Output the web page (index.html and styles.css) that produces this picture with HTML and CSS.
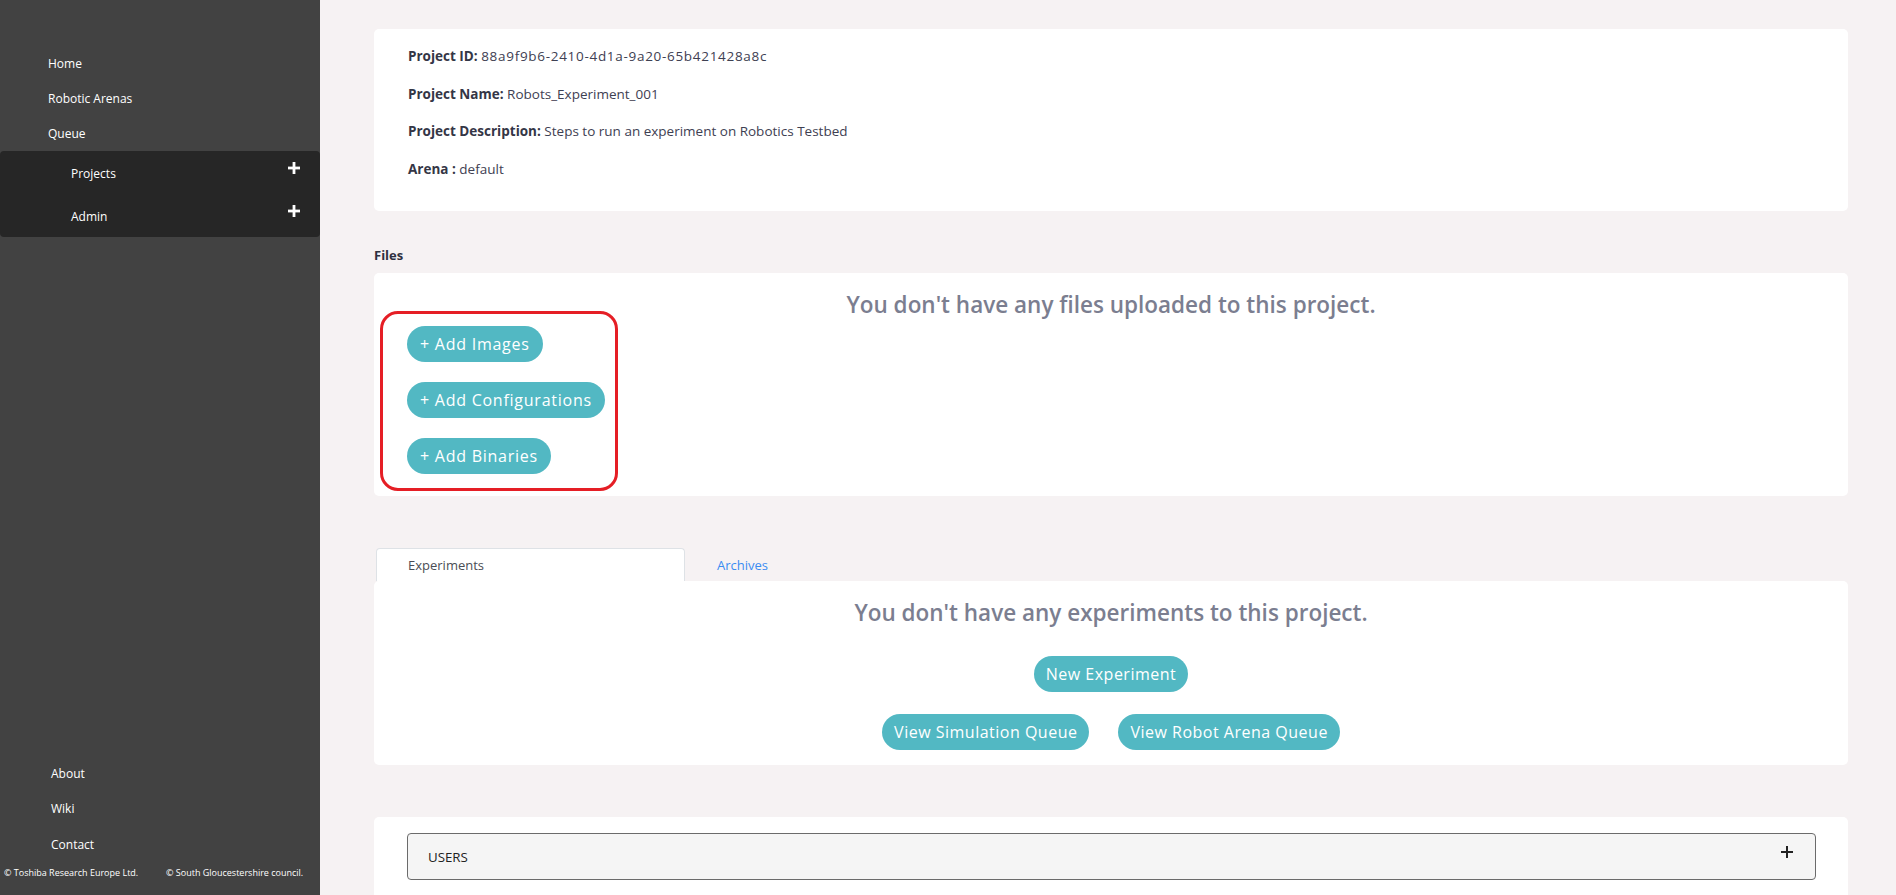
FILE: index.html
```html
<!DOCTYPE html>
<html lang="en">
<head>
<meta charset="utf-8">
<title>Project</title>
<link rel="stylesheet" href="styles.css">
</head>
<body>
<div class="app">
  <aside class="sidebar">
    <nav class="nav-top">
      <a class="nav-link">Home</a>
      <a class="nav-link">Robotic Arenas</a>
      <a class="nav-link">Queue</a>
    </nav>
    <div class="submenu">
      <div class="sub-item"><span>Projects</span>
        <svg class="plus-white" viewBox="0 0 12 12" width="12" height="12"><rect x="4.6" y="0" width="2.8" height="12" fill="#fff"/><rect x="0" y="4.6" width="12" height="2.8" fill="#fff"/></svg>
      </div>
      <div class="sub-item"><span>Admin</span>
        <svg class="plus-white" viewBox="0 0 12 12" width="12" height="12"><rect x="4.6" y="0" width="2.8" height="12" fill="#fff"/><rect x="0" y="4.6" width="12" height="2.8" fill="#fff"/></svg>
      </div>
    </div>
    <nav class="nav-bottom">
      <a class="nav-link">About</a>
      <a class="nav-link">Wiki</a>
      <a class="nav-link">Contact</a>
    </nav>
    <div class="copyright">
      <span>© Toshiba Research Europe Ltd.</span>
      <span>© South Gloucestershire council.</span>
    </div>
  </aside>

  <main class="main">
    <section class="card info-card">
      <p><b>Project ID:</b> <span class="id-value">88a9f9b6-2410-4d1a-9a20-65b421428a8c</span></p>
      <p><b>Project Name:</b> Robots_Experiment_001</p>
      <p><b>Project Description:</b> Steps to run an experiment on Robotics Testbed</p>
      <p><b>Arena :</b> default</p>
    </section>

    <h6 class="section-label">Files</h6>
    <section class="card files-card">
      <h3 class="empty-title">You don't have any files uploaded to this project.</h3>
      <div class="file-buttons">
        <button class="pill">+ Add Images</button>
        <button class="pill">+ Add Configurations</button>
        <button class="pill">+ Add Binaries</button>
      </div>
      <div class="highlight"></div>
    </section>

    <div class="tabs">
      <div class="tab active">Experiments</div>
      <div class="tab link">Archives</div>
    </div>
    <section class="card exp-card">
      <h3 class="empty-title">You don't have any experiments to this project.</h3>
      <div class="exp-row">
        <button class="pill">New Experiment</button>
      </div>
      <div class="exp-row">
        <button class="pill">View Simulation Queue</button>
        <button class="pill">View Robot Arena Queue</button>
      </div>
    </section>

    <section class="card users-card">
      <div class="accordion">
        <span>USERS</span>
        <svg class="plus-dark" viewBox="0 0 12 12" width="12" height="12"><rect x="5" y="0" width="2" height="12" fill="#222"/><rect x="0" y="5" width="12" height="2" fill="#222"/></svg>
      </div>
    </section>
  </main>
</div>
</body>
</html>
```
FILE: styles.css
```css
* { box-sizing: border-box; }
html, body { margin: 0; padding: 0; }
body {
  font-family: "Open Sans", "Noto Sans", sans-serif;
  background: #f6f2f3;
  overflow: hidden;
}
.app {
  display: flex;
  height: 100vh;
  overflow: hidden;
}
.sidebar {
  width: 320px;
  flex: 0 0 320px;
  background: #424242;
  display: flex;
  flex-direction: column;
  padding-top: 45px;
  color: #fff;
}
.nav-top, .nav-bottom {
  display: flex;
  flex-direction: column;
}
.nav-link {
  display: block;
  height: 35px;
  line-height: 35px;
  padding-top: 1px;
  font-size: 12px;
  color: #fff;
  padding-left: 48px;
}
.nav-bottom { margin-top: auto; }
.nav-bottom .nav-link { padding-left: 51px; height: 35.5px; line-height: 35.5px; padding-top: 0; }
.submenu {
  margin-top: 1px;
  background: #262626;
  border-radius: 4px;
  display: flex;
  flex-direction: column;
}
.sub-item {
  height: 43px;
  display: flex;
  align-items: center;
  justify-content: space-between;
  padding: 0 20px 0 71px;
  font-size: 12px;
}
.sub-item span { padding-top: 1px; }
.plus-white { margin-top: -10px; }
.copyright {
  display: flex;
  font-size: 9px;
  padding: 4px 0 16px 4px;
  white-space: nowrap;
}
.copyright span:first-child { width: 162px; }

.main {
  flex: 1;
  padding: 29px 48px 0 54px;
  min-width: 0;
}
.card {
  background: #fff;
  border-radius: 5px;
}
.info-card {
  padding: 17px 34px 15px;
  color: #3e4052;
  font-size: 13.5px;
}
.info-card p {
  margin: 0 0 17.5px;
  line-height: 20px;
  white-space: nowrap;
}
.info-card b { color: #343646; font-weight: 700; }
.id-value { letter-spacing: 0.7px; }
.section-label {
  margin: 36px 0 0;
  height: 26px;
  font-size: 13px;
  font-weight: 700;
  color: #2e3040;
  line-height: 16px;
}
.files-card {
  position: relative;
  padding: 19px 33px 22px;
}
.empty-title {
  margin: 0;
  text-align: center;
  font-size: 22.5px;
  line-height: 26px;
  font-weight: 600;
  color: #7b7e90;
}
.file-buttons {
  display: flex;
  flex-direction: column;
  align-items: flex-start;
  gap: 20px;
  margin-top: 8px;
}
.pill {
  font-family: inherit;
  background: #52b8c3;
  color: #fff;
  border: none;
  border-radius: 18px;
  height: 36px;
  padding: 0 13px;
  font-size: 16px;
  letter-spacing: 0.75px;
  cursor: pointer;
  white-space: nowrap;
}
.highlight {
  position: absolute;
  left: 6px;
  top: 38px;
  width: 238px;
  height: 180px;
  border: 3px solid #e51e25;
  border-radius: 18px;
  pointer-events: none;
}
.tabs {
  display: flex;
  margin-top: 52px;
  height: 33px;
}
.tab {
  width: 309px;
  padding-left: 31px;
  line-height: 32px;
  font-size: 13px;
  border: 1px solid transparent;
  border-bottom: none;
  border-radius: 4px 4px 0 0;
}
.tab.active {
  margin-left: 2px;
  background: #fff;
  border-color: #dee2e6;
  color: #4a4d55;
}
.tab.link { color: #3a8cf2; }
.exp-card {
  padding: 19px 0 15px;
}
.exp-row {
  display: flex;
  justify-content: center;
  gap: 29px;
}
.exp-row .pill { padding: 0 12px; letter-spacing: 0.5px; }
.exp-row:nth-child(2) { margin-top: 30px; }
.exp-row:nth-child(3) { margin-top: 22px; }
.users-card {
  margin-top: 52px;
  padding: 16px 32px 40px 33px;
}
.accordion {
  height: 47px;
  border: 1px solid #6b6b6b;
  border-radius: 4px;
  background: #f5f5f5;
  display: flex;
  align-items: center;
  justify-content: space-between;
  padding: 0 22px 0 20px;
  font-size: 13.3px;
  color: #222;
}
.plus-dark { margin-top: -10px; }
```
